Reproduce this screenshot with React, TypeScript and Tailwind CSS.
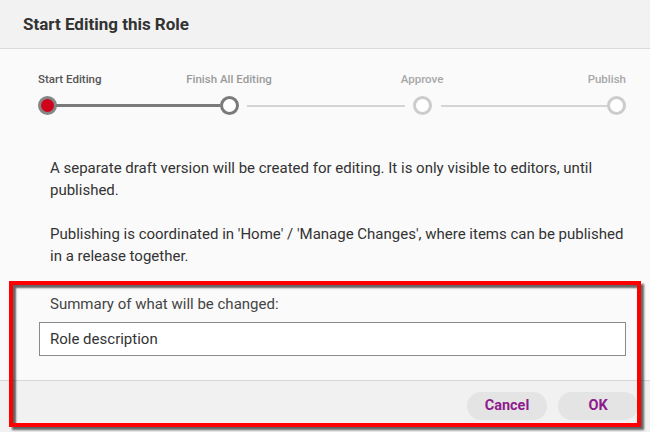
export default function App() {
    const steps = [
        { label: "Start Editing", align: "items-start", text: "text-[#555]", circle: "border-[#858585] bg-[#d0021b]" },
        { label: "Finish All Editing", align: "items-center", text: "text-[#9a9a9a]", circle: "border-[#7a7a7a] bg-white" },
        { label: "Approve", align: "items-center", text: "text-[#a8a8a8]", circle: "border-[#cccccc] bg-white" },
        { label: "Publish", align: "items-end", text: "text-[#a8a8a8]", circle: "border-[#cccccc] bg-white" },
    ];

    const Step = ({ i }: { i: number }) => (
        <div className={`flex flex-col w-[18px] ${steps[i].align}`}>
            <span className={`whitespace-nowrap text-[11.5px] leading-[14px] font-medium ${steps[i].text}`}>{steps[i].label}</span>
            <div className={`mt-[10px] w-[19px] h-[19px] rounded-full border-[3px] box-border shrink-0 ${steps[i].circle}`} />
        </div>
    );

    return (
        <div className="relative w-[650px] h-[432px] bg-[#fafafa] flex flex-col font-['Roboto',sans-serif] overflow-hidden">
            {/* Header */}
            <div className="h-[49px] shrink-0 bg-[#f2f2f2] border-b border-[#d9d9d9] flex items-center pl-[23px] pt-[1px]">
                <h1 className="text-[17px] font-bold text-[#333]">Start Editing this Role</h1>
            </div>

            {/* Body */}
            <div className="pl-[38px] pr-[24px] pt-[23px]">
                {/* Stepper */}
                <div className="flex">
                    <Step i={0} />
                    <div className="self-end mb-[8px] h-[3px] w-[164px] bg-[#7a7a7a]" />
                    <Step i={1} />
                    <div className="self-end mb-[8px] h-[2px] w-[158px] ml-[9px] mr-[8px] bg-[#d4d4d4]" />
                    <Step i={2} />
                    <div className="self-end mb-[8px] h-[2px] w-[167px] ml-[10px] bg-[#d4d4d4]" />
                    <Step i={3} />
                </div>

                <div className="mt-[42px] pl-[12px] text-[15px] leading-[22px] text-[#333]">
                    <p>A separate draft version will be created for editing. It is only visible to editors, until published.</p>
                    <p className="mt-[22px]">Publishing is coordinated in 'Home' / 'Manage Changes', where items can be published in a release together.</p>
                </div>

                <p className="mt-[26px] pl-[12px] text-[15px] leading-[22px] text-[#444]">Summary of what will be changed:</p>
                <div className="mt-[7px] ml-[1px] w-[587px] h-[34px] bg-white border border-[#8a8a8a] flex items-center pl-[10px] text-[15px] text-[#333]">
                    Role description
                </div>
            </div>

            {/* Footer */}
            <div className="mt-auto h-[52px] shrink-0 bg-[#f1f1f1] border-t border-[#d6d6d6] flex justify-end items-start pt-[11px] pr-[12px] gap-[11px]">
                <button className="w-[80px] h-[28px] rounded-full bg-[#e4e4e4] text-[14.5px] font-bold text-[#8e1b8c]">Cancel</button>
                <button className="w-[80px] h-[28px] rounded-full bg-[#e4e4e4] text-[14.5px] font-bold text-[#8e1b8c]">OK</button>
            </div>

            {/* Annotation box */}
            <div className="absolute left-[9px] top-[281px] w-[632px] h-[146px] border-4 border-[#ff0000] pointer-events-none shadow-[3px_3px_2px_rgba(0,0,0,0.6),inset_3px_3px_2px_rgba(0,0,0,0.6)]" />
        </div>
    );
}
